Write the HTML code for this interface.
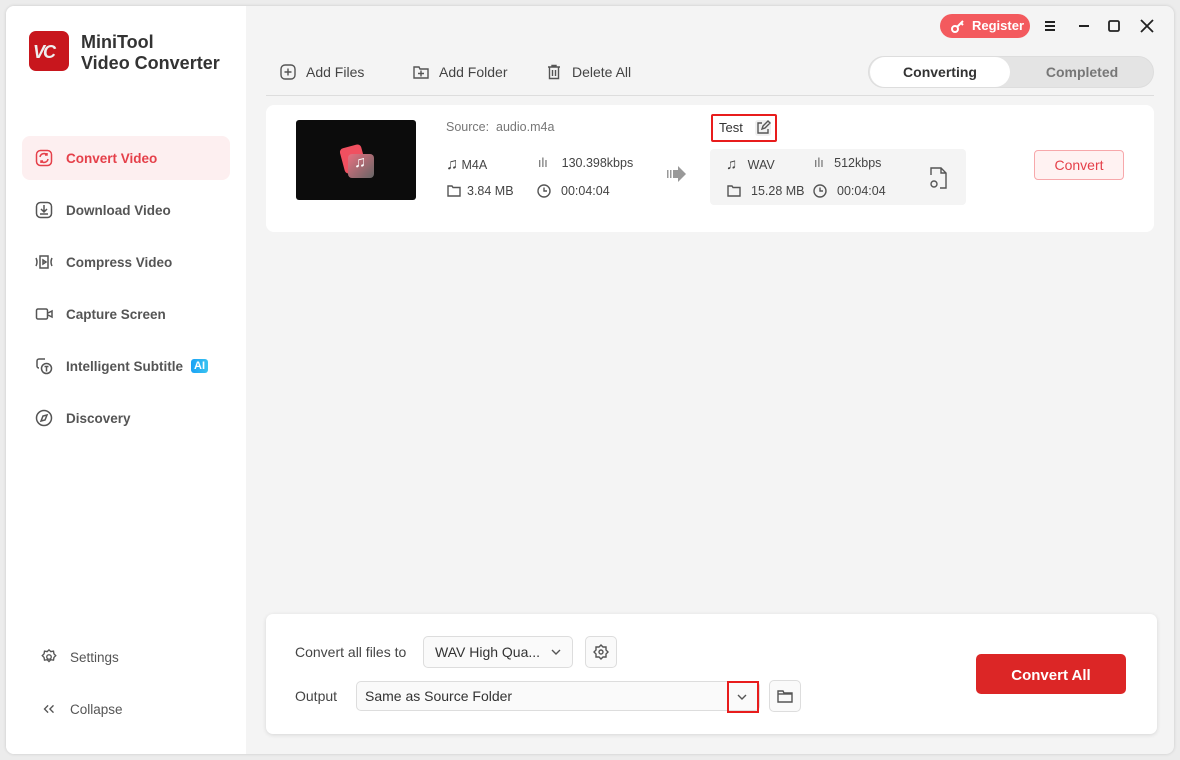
<!DOCTYPE html>
<html><head><meta charset="utf-8"><style>
*{box-sizing:border-box;margin:0;padding:0}
body{width:1180px;height:760px;background:#ececec;font-family:"Liberation Sans",sans-serif;position:relative;overflow:hidden;color:#333}
.win{position:absolute;left:6px;top:6px;width:1168px;height:748px;border-radius:8px;background:#f4f4f4;overflow:hidden;box-shadow:0 0 3px rgba(0,0,0,.15)}
.side{position:absolute;left:0;top:0;width:240px;height:748px;background:#fff}
.abs{position:absolute}
.nav{position:absolute;left:16px;width:208px;height:44px;display:flex;align-items:center;padding-left:12px;font-size:13.5px;color:#555;font-weight:bold}
.nav svg{width:20px;height:20px;margin-right:12px;fill:none;stroke:#555;stroke-width:1.5}
.nav.on{background:#fdeff0;color:#e5404a;border-radius:8px}
.nav.on svg{stroke:#e5404a}
.t{position:absolute;font-size:12.5px;color:#444;white-space:nowrap}
.ic{position:absolute;fill:none;stroke:#555;stroke-width:1.4}
</style></head><body>
<div class="win">
 <div class="side">
  <div class="abs" style="left:23px;top:25px;width:40px;height:40px;border-radius:7px;background:#c8161d;"></div>
  <div class="abs" style="left:27px;top:36px;font:bold italic 18px 'Liberation Sans';color:#eee;letter-spacing:-2px">VC</div>
  <div class="abs" style="left:75px;top:26px;font-weight:bold;font-size:18px;line-height:21px;color:#333">MiniTool<br>Video Converter</div>
  <div class="nav on" style="top:130px"><svg viewBox="0 0 20 20"><rect x="2.5" y="2.5" width="15" height="15" rx="4"/><path d="M6 9a4 4 0 0 1 7-2M14 11a4 4 0 0 1-7 2M13 5v2h-2M7 15v-2h2"/></svg>Convert Video</div>
  <div class="nav" style="top:182px"><svg viewBox="0 0 20 20"><rect x="2.5" y="2.5" width="15" height="15" rx="4"/><path d="M10 5v7M7 9l3 3 3-3M6 14h8"/></svg>Download Video</div>
  <div class="nav" style="top:234px"><svg viewBox="0 0 20 20"><rect x="6" y="4" width="8" height="12"/><path d="M9 8l3 2-3 2zM2 6q2 4 0 8M18 6q-2 4 0 8"/></svg>Compress Video</div>
  <div class="nav" style="top:286px"><svg viewBox="0 0 20 20"><rect x="2.5" y="5" width="11" height="10" rx="1.5"/><path d="M14 9l4-2v6l-4-2"/></svg>Capture Screen</div>
  <div class="nav" style="top:338px"><svg viewBox="0 0 20 20"><path d="M11 3H5a2 2 0 0 0-2 2v5a2 2 0 0 0 2 2"/><circle cx="12.5" cy="12.5" r="5"/><path d="M10.5 10.5h4M12.5 10.5v5"/></svg>Intelligent Subtitle<span style="margin-left:8px;background:linear-gradient(90deg,#1aa2f5,#3bc3f0);color:#fff;font-size:11px;padding:1px 3px;border-radius:3px">AI</span></div>
  <div class="nav" style="top:390px"><svg viewBox="0 0 20 20"><circle cx="10" cy="10" r="7.5"/><path d="M13 7l-2 5-4 1 2-5z"/></svg>Discovery</div>
  <div class="nav" style="top:629px;padding-left:18px;font-weight:normal;color:#555"><svg viewBox="0 0 20 20" style="width:18px;height:18px"><circle cx="10" cy="10" r="2.5"/><path d="M10 2l2 2 3-.5.5 3 2 2-2 2-.5 3-3-.5-2 2-2-2-3 .5-.5-3-2-2 2-2 .5-3 3 .5z"/></svg>Settings</div>
  <div class="nav" style="top:681px;padding-left:18px;font-weight:normal;color:#555"><svg viewBox="0 0 20 20" style="width:18px;height:18px"><path d="M9 6l-4 4 4 4M15 6l-4 4 4 4"/></svg>Collapse</div>
 </div>
 <div class="abs" style="left:934px;top:8px;width:90px;height:24px;border-radius:12px;background:#f35a5e;color:#fff;font-weight:bold;font-size:13px;line-height:24px;padding-left:32px">Register</div>
 <svg class="abs" style="left:944px;top:12px" width="16" height="16" viewBox="0 0 16 16" fill="none" stroke="#fff" stroke-width="2"><circle cx="5" cy="11" r="3"/><path d="M7 9l6-6M11 5l2 2"/></svg>
 <svg class="abs" style="left:1038px;top:14px" width="12" height="12" viewBox="0 0 12 12" stroke="#222" stroke-width="2"><path d="M1 2h10M1 6h10M1 10h10"/></svg>
 <svg class="abs" style="left:1072px;top:14px" width="12" height="12" viewBox="0 0 12 12" stroke="#222" stroke-width="2"><path d="M1 6h10"/></svg>
 <svg class="abs" style="left:1102px;top:14px" width="12" height="12" viewBox="0 0 12 12" fill="none" stroke="#222" stroke-width="1.8"><rect x="1" y="1" width="10" height="10" rx="1.5"/></svg>
 <svg class="abs" style="left:1134px;top:13px" width="14" height="14" viewBox="0 0 14 14" stroke="#222" stroke-width="1.8"><path d="M1 1l12 12M13 1L1 13"/></svg>
 <div class="abs" style="left:862px;top:50px;width:286px;height:32px;border-radius:16px;background:#e4e4e4;border:1px solid #ddd"></div>
 <div class="abs" style="left:864px;top:51px;width:140px;height:30px;border-radius:15px;background:#fff;text-align:center;line-height:30px;font-weight:bold;font-size:14px;color:#333">Converting</div>
 <div class="abs" style="left:1006px;top:51px;width:140px;height:30px;text-align:center;line-height:30px;font-weight:bold;font-size:14px;color:#777">Completed</div>
 <svg class="ic" style="left:274px;top:58px" width="16" height="16" viewBox="0 0 16 16"><rect x="1" y="1" width="14" height="14" rx="4"/><path d="M8 4.5v7M4.5 8h7"/></svg>
 <div class="t" style="left:300px;top:58px;font-size:14px">Add Files</div>
 <svg class="ic" style="left:407px;top:58px" width="16" height="16" viewBox="0 0 16 16"><path d="M1 3h5l1 2h8v9H1z"/><path d="M8 6.5v6M5 9.5h6"/></svg>
 <div class="t" style="left:433px;top:58px;font-size:14px">Add Folder</div>
 <svg class="ic" style="left:540px;top:58px" width="16" height="16" viewBox="0 0 16 16"><path d="M2 3h12M6 3V1.5h4V3M3.5 3v11.5h9V3M6.5 6v6M9.5 6v6"/></svg>
 <div class="t" style="left:566px;top:58px;font-size:14px">Delete All</div>
 <div class="abs" style="left:260px;top:89px;width:888px;height:1px;background:#ddd"></div>
 <div class="abs" style="left:260px;top:99px;width:888px;height:127px;background:#fff;border-radius:8px"></div>
 <div class="abs" style="left:290px;top:114px;width:120px;height:80px;background:#0c0c0c;border-radius:3px"></div>
 <div class="abs" style="left:336px;top:140px;width:22px;height:26px;background:#f05060;border-radius:4px;transform:rotate(-15deg)"></div>
 <div class="abs" style="left:342px;top:148px;width:26px;height:24px;background:linear-gradient(135deg,#e87080,#666);border-radius:4px"></div>
 <div class="abs" style="left:348px;top:148px;color:#fff;font-size:16px">♫</div>
 <div class="t" style="left:440px;top:114px;color:#777">Source:&nbsp;&nbsp;audio.m4a</div>
 <div class="t" style="left:440px;top:150px"><span style="font-size:16px">♫</span>&nbsp;M4A</div>
 <svg class="ic" style="left:441px;top:178px" width="14" height="14" viewBox="0 0 14 14"><path d="M1 2h4l1 1.5h7V12H1z"/></svg>
 <div class="t" style="left:461px;top:178px">3.84 MB</div>
 <div class="t" style="left:532px;top:150px;color:#666">ılı&nbsp;&nbsp;&nbsp;&nbsp;<span style="color:#444">130.398kbps</span></div>
 <svg class="ic" style="left:531px;top:178px" width="14" height="14" viewBox="0 0 14 14"><circle cx="7" cy="7" r="6"/><path d="M7 3.5V7h3"/></svg>
 <div class="t" style="left:555px;top:178px">00:04:04</div>
 <svg class="abs" style="left:660px;top:158px" width="22" height="20" viewBox="0 0 22 20" fill="#999"><rect x="1" y="6" width="1.5" height="8"/><rect x="4" y="6" width="1.5" height="8"/><rect x="7" y="6" width="5" height="8"/><path d="M12 2l8 8-8 8z"/></svg>
 <div class="abs" style="left:705px;top:108px;width:66px;height:28px;border:2px solid #e81c1c;border-radius:2px"></div>
 <div class="t" style="left:713px;top:114px;font-size:13px;color:#333">Test</div>
 <div class="abs" style="left:749px;top:114px;width:16px;height:16px;background:#f0f0f0;border-radius:3px"></div>
 <svg class="ic" style="left:749px;top:114px" width="16" height="16" viewBox="0 0 16 16" stroke="#777"><path d="M7 3H3v10h10V9M7 9l1-3 5-5 2 2-5 5z"/></svg>
 <div class="abs" style="left:704px;top:143px;width:256px;height:56px;background:#f4f4f4;border-radius:4px"></div>
 <div class="t" style="left:720px;top:150px"><span style="font-size:15px">♫</span>&nbsp;&nbsp;&nbsp;WAV</div>
 <div class="t" style="left:808px;top:150px;color:#666">ılı&nbsp;&nbsp;&nbsp;<span style="color:#444">512kbps</span></div>
 <svg class="ic" style="left:721px;top:178px" width="14" height="14" viewBox="0 0 14 14"><path d="M1 2h4l1 1.5h7V12H1z"/></svg>
 <div class="t" style="left:745px;top:178px">15.28 MB</div>
 <svg class="ic" style="left:807px;top:178px" width="14" height="14" viewBox="0 0 14 14"><circle cx="7" cy="7" r="6"/><path d="M7 3.5V7h3"/></svg>
 <div class="t" style="left:831px;top:178px">00:04:04</div>
 <svg class="ic" style="left:922px;top:160px" width="22" height="24" viewBox="0 0 22 24" stroke="#444" stroke-width="1.5"><path d="M3 9V2h10l5 5v15h-6M13 2v5h5"/><circle cx="6" cy="18" r="3"/></svg>
 <div class="abs" style="left:1028px;top:144px;width:90px;height:30px;border:1px solid #f7a8ab;background:#fff2f2;border-radius:4px;color:#e5404a;font-size:14px;text-align:center;line-height:28px">Convert</div>
 <div class="abs" style="left:260px;top:608px;width:891px;height:120px;background:#fff;border-radius:7px;box-shadow:0 1px 4px rgba(0,0,0,.12)"></div>
 <div class="t" style="left:289px;top:638px;font-size:14px">Convert all files to</div>
 <div class="abs" style="left:417px;top:630px;width:150px;height:32px;border:1px solid #ddd;background:#fafafa;border-radius:5px;font-size:14px;line-height:30px;padding-left:11px;color:#333">WAV High Qua...</div>
 <svg class="ic" style="left:545px;top:642px" width="10" height="8" viewBox="0 0 10 8"><path d="M1 2l4 4 4-4"/></svg>
 <div class="abs" style="left:579px;top:630px;width:32px;height:32px;border:1px solid #ddd;background:#fafafa;border-radius:5px"></div>
 <svg class="ic" style="left:587px;top:638px" width="16" height="16" viewBox="0 0 16 16" stroke="#333" stroke-width="1.5"><circle cx="8" cy="8" r="2"/><path d="M8 1l2 2h3v3l2 2-2 2v3h-3l-2 2-2-2H3v-3L1 8l2-2V3h3z"/></svg>
 <div class="t" style="left:289px;top:682px;font-size:14px">Output</div>
 <div class="abs" style="left:350px;top:675px;width:404px;height:30px;border:1px solid #ddd;background:#fafafa;border-radius:5px;font-size:14px;line-height:28px;padding-left:8px;color:#333">Same as Source Folder</div>
 <div class="abs" style="left:721px;top:675px;width:32px;height:32px;border:2px solid #e81c1c"></div>
 <svg class="ic" style="left:731px;top:687px" width="10" height="8" viewBox="0 0 10 8"><path d="M1 2l4 4 4-4"/></svg>
 <div class="abs" style="left:763px;top:674px;width:32px;height:32px;border:1px solid #ddd;background:#fafafa;border-radius:5px"></div>
 <svg class="ic" style="left:771px;top:682px" width="16" height="16" viewBox="0 0 16 16" stroke="#333" stroke-width="1.5"><path d="M1 3h5l1 2h8v9H1z"/><path d="M1 6h14"/></svg>
 <div class="abs" style="left:970px;top:648px;width:150px;height:40px;background:#dc2626;border-radius:5px;color:#fff;font-weight:bold;font-size:15px;text-align:center;line-height:44px">Convert All</div>
</div>
</body></html>
